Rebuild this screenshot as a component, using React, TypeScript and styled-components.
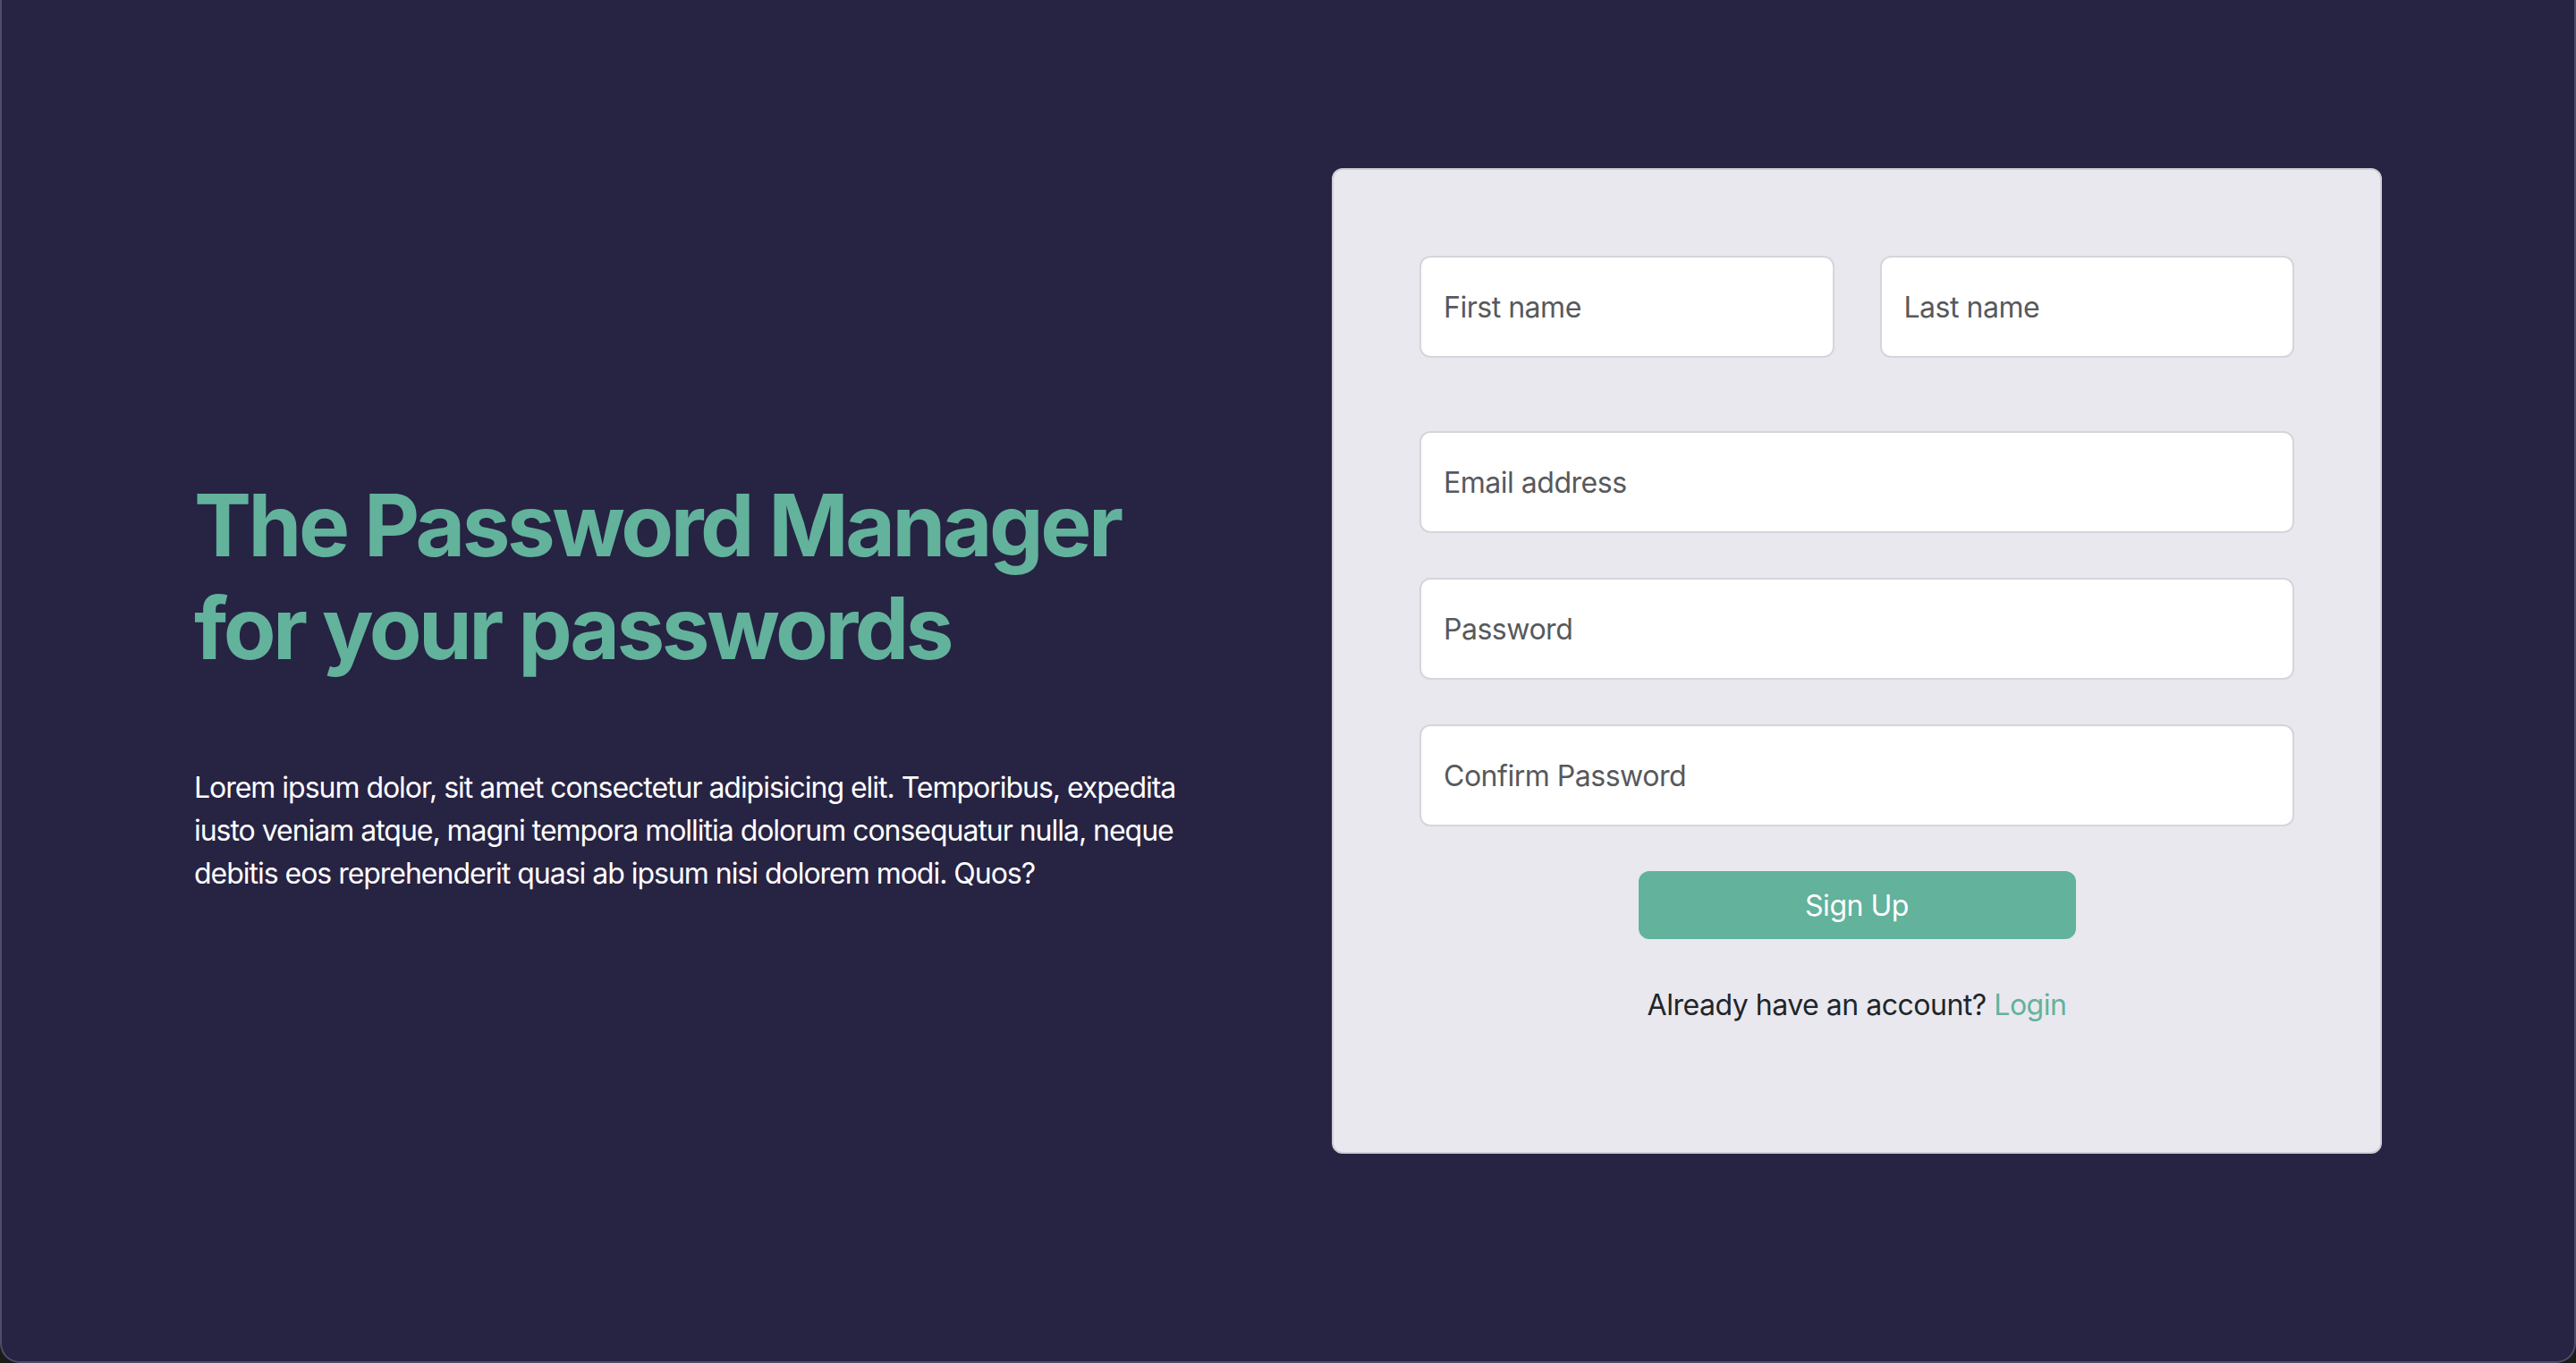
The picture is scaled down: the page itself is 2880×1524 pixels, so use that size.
import React from "react";
import styled, { createGlobalStyle } from "styled-components";

const GlobalStyle = createGlobalStyle`
  * {
    box-sizing: border-box;
  }
  html,
  body {
    margin: 0;
    padding: 0;
    background: #1b1b17;
  }
  body {
    font-family: Inter, "Noto Sans", "Liberation Sans", sans-serif;
    letter-spacing: -0.03em;
  }
`;

const Page = styled.main`
  min-height: 1524px;
  background: #272343;
  border: 2px solid #4f4b6b;
  border-top: none;
  border-radius: 0 0 22px 22px;
  padding: 188px 215px 0;
  display: grid;
  grid-template-columns: 1fr 1fr;
  column-gap: 98px;
  align-items: start;
`;

const Intro = styled.section`
  padding-top: 342px;
`;

const Title = styled.h1`
  margin: 0 0 97px;
  font-size: 96px;
  line-height: 1.2;
  font-weight: 700;
  letter-spacing: -0.036em;
  color: #62b29c;
`;

const Lead = styled.p`
  max-width: 1150px;
  margin: 0;
  font-size: 32px;
  line-height: 1.5;
  letter-spacing: -0.032em;
  color: #ffffff;
`;

const Card = styled.form`
  background: #e9e8ef;
  border: 2px solid #cfced6;
  border-radius: 12px;
  padding: 96px;
  display: flex;
  flex-direction: column;
`;

const NameRow = styled.div`
  display: grid;
  grid-template-columns: 1fr 1fr;
  column-gap: 51px;
  margin-bottom: 82px;
`;

const Field = styled.input<{ $gap?: number }>`
  display: block;
  width: 100%;
  height: 114px;
  margin: 0 0 ${(p) => p.$gap ?? 0}px;
  padding: 0 25px;
  font-family: inherit;
  font-size: 32px;
  letter-spacing: inherit;
  color: #212529;
  background: #ffffff;
  border: 2px solid #d3d6da;
  border-radius: 12px;
  outline: none;

  &::placeholder {
    color: #57595c;
  }
`;

const Submit = styled.button`
  align-self: center;
  width: 50%;
  height: 76px;
  margin-bottom: 50px;
  font-family: inherit;
  font-size: 32px;
  letter-spacing: inherit;
  color: #ffffff;
  background: #62b29c;
  border: none;
  border-radius: 12px;
  cursor: pointer;
`;

const Footnote = styled.p`
  margin: 0 0 44px;
  text-align: center;
  font-size: 32px;
  line-height: 1.5;
  color: #212529;
`;

const LoginLink = styled.a`
  color: #62b29c;
  text-decoration: none;
`;

export default function App() {
  return (
    <>
      <GlobalStyle />
      <Page>
        <Intro>
          <Title>
            The Password Manager
            <br />
            for your passwords
          </Title>
          <Lead>
            Lorem ipsum dolor, sit amet consectetur adipisicing elit.
            Temporibus, expedita iusto veniam atque, magni tempora mollitia
            dolorum consequatur nulla, neque debitis eos reprehenderit quasi ab
            ipsum nisi dolorem modi. Quos?
          </Lead>
        </Intro>

        <Card onSubmit={(e) => e.preventDefault()}>
          <NameRow>
            <Field type="text" placeholder="First name" />
            <Field type="text" placeholder="Last name" />
          </NameRow>
          <Field type="email" placeholder="Email address" $gap={50} />
          <Field type="password" placeholder="Password" $gap={50} />
          <Field type="password" placeholder="Confirm Password" $gap={50} />
          <Submit type="submit">Sign Up</Submit>
          <Footnote>
            Already have an account? <LoginLink href="#">Login</LoginLink>
          </Footnote>
        </Card>
      </Page>
    </>
  );
}
